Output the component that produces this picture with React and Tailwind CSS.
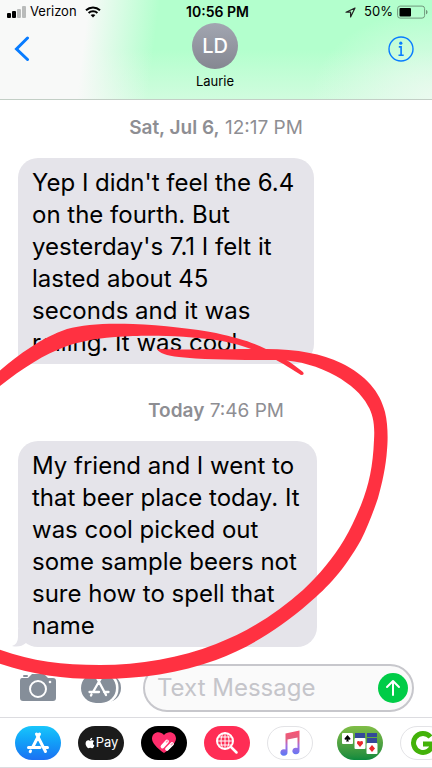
import { FaApple } from "react-icons/fa";

const RED = "#ff3141";

// Status bar: signal, carrier, clock and battery
const StatusBar = () => (
  <div className="grid grid-cols-3 items-center h-6 pl-[7px] pr-1 text-[13px] text-black">
    <div className="flex items-center gap-1">
      <svg width="19" height="12" viewBox="0 0 19 12">
        <rect x="0" y="7" width="4" height="5" rx="1" />
        <rect x="5" y="5" width="4" height="7" rx="1" />
        <rect x="10" y="3" width="4" height="9" rx="1" fill="#b9bbba" />
        <rect x="15" y="0" width="4" height="12" rx="1" fill="#b9bbba" />
      </svg>
      <span>Verizon</span>
      <svg className="ml-1" width="16" height="12" viewBox="0 0 16 12">
        <path d="M1 4.3C5 .6 11 .6 15 4.3" fill="none" stroke="#000" strokeWidth="2" />
        <path d="M3.6 7C6 4.8 10 4.8 12.4 7" fill="none" stroke="#000" strokeWidth="2" />
        <path d="M5.6 9.1C7 7.9 9 7.9 10.4 9.1L8 11.5Z" />
      </svg>
    </div>
    <div className="text-center text-sm font-semibold whitespace-nowrap">10:56 PM</div>
    <div className="flex items-center justify-end gap-1">
      <svg className="mr-1" width="11" height="11" viewBox="0 0 11 11">
        <path d="M10 1 1 5.2H5.6V10Z" fill="none" stroke="#222" strokeWidth="1.2" strokeLinejoin="round" />
      </svg>
      <span>50%</span>
      <svg width="31" height="14" viewBox="0 0 31 14">
        <rect x=".6" y="1.1" width="27" height="12" rx="2.5" fill="none" stroke="#71977c" />
        <rect x="2.5" y="3" width="11.5" height="8.5" rx="1" />
        <path d="M29 5c2 .6 2 3.7 0 4.3Z" fill="#71977c" />
      </svg>
    </div>
  </div>
);

const Header = () => (
  <header className="border-b border-[#c3cfc6] bg-[radial-gradient(ellipse_28%_90%_at_100%_100%,#eafaef_0%,transparent_100%),linear-gradient(97deg,#f8f9f8_20%,transparent_36%),linear-gradient(to_bottom,#b3ffcd_50%,#d0fcde_100%)]">
    <StatusBar />
    <div className="flex items-start justify-between h-[75px] px-[14px]">
      <button aria-label="Back" className="mt-3 w-7">
        <svg width="17" height="26" viewBox="0 0 17 26">
          <path d="M13.5 2 2.500 13 13.5 23.5" fill="none" stroke="#087cff" strokeWidth="3" strokeLinecap="round" />
        </svg>
      </button>
      <div className="flex flex-col items-center">
        <div className="flex items-center justify-center size-[46px] -mt-px rounded-full bg-linear-to-b from-[#a2a6b1] to-[#858791] text-white text-xl font-medium">
          LD
        </div>
        <span className="mt-[2px] text-[13px] leading-5 text-black">Laurie</span>
      </div>
      <button aria-label="Info" className="mt-3 mr-1">
        <svg width="26" height="26" viewBox="0 0 26 26">
          <circle cx="13" cy="13" r="12" fill="none" stroke="#087cff" strokeWidth="1.4" />
          <circle cx="12.800" cy="7.200" r="1.6" fill="#087cff" />
          <path d="M10.800 10.9H13.100V19M10.500 19.300H15.700" fill="none" stroke="#087cff" strokeWidth="1.600" />
        </svg>
      </button>
    </div>
  </header>
);

const Stamp = ({ day, time }) => (
  <p className="text-center text-[19px] leading-6 text-[#8e8e93]">
    <span className="font-semibold">{day}</span> {time}
  </p>
);

const Bubble = ({ lines, className }) => (
  <p className={`w-fit ml-[18px] pl-[14px] pt-[9px] pb-[5px] bg-[#e5e4ea] text-2xl leading-8 text-black whitespace-nowrap ${className}`}>
    {lines.map((line) => (
      <span key={line} className="block">
        {line}
      </span>
    ))}
  </p>
);

const first = [
  "Yep I didn't feel the 6.4",
  "on the fourth. But",
  "yesterday's 7.1 I felt it",
  "lasted about 45",
  "seconds and it was",
  "rolling. It was cool",
];

const second = [
  "My friend and I went to",
  "that beer place today. It",
  "was cool picked out",
  "some sample beers not",
  "sure how to spell that",
  "name",
];

const Compose = () => (
  <form className="flex items-center gap-[22px] h-[52px] pl-[19px] pr-[18px]" onSubmit={(e) => e.preventDefault()}>
    <button type="button" aria-label="Camera">
      <svg width="38" height="30" viewBox="0 0 38 30">
        <rect x="4" y="2" width="5" height="2" rx="1" fill="#858e99" />
        <path d="M3 5H9L13 1H25L29 5H34Q37 5 37 8V25Q37 28 34 28H4Q1 28 1 25V8Q1 5 3 5Z" fill="#858e99" />
        <circle cx="19" cy="16" r="8" fill="none" stroke="#fff" strokeWidth="2" />
        <circle cx="31" cy="9" r="1.3" fill="#fff" />
      </svg>
    </button>
    <button type="button" aria-label="Apps">
      <svg width="42" height="32" viewBox="0 0 42 32">
        <rect x="8" y="2" width="34" height="28" rx="14" fill="#858e99" />
        <rect x="4" y="0" width="35.500" height="32" rx="15" fill="#fff" />
        <rect x="2" y="1" width="35" height="30" rx="15" fill="#858e99" />
        <path d="M21.5 7 14 20M18.5 7 27 23M10.5 20H20M25 20H29.5M12.5 22.5 12 23.5" fill="none" stroke="#fff" strokeWidth="2.3" strokeLinecap="round" />
      </svg>
    </button>
    <div className="flex flex-1 min-w-0 items-center h-12 pl-3 pr-1 rounded-full border-2 border-[#c7c7cc] bg-[#fafafa]">
      <input
        aria-label="Text Message"
        placeholder="Text Message"
        className="flex-1 min-w-0 bg-transparent text-2xl outline-none placeholder:text-[#c5c5ca]"
      />
      <button aria-label="Send" className="flex items-center justify-center size-[30px] rounded-full bg-[#00cc47]">
        <svg width="18" height="20" viewBox="0 0 18 20" fill="none" stroke="#fff" strokeWidth="2" strokeLinecap="round" strokeLinejoin="round">
          <path d="M9 17V3M3 9 9 3 15 9" />
        </svg>
      </button>
    </div>
  </form>
);

const pill = "flex shrink-0 items-center justify-center w-[46px] h-[34px] rounded-full overflow-hidden";

const AppDrawer = () => (
  <nav className="flex items-center gap-[17px] h-[51px] pl-[15px] border-y border-[#dcdce0] overflow-hidden">
    <button aria-label="App Store" className={`${pill} bg-linear-to-b from-[#1ac6fb] to-[#1d70f2]`}>
      <svg width="24" height="24" viewBox="0 0 24 24" fill="none" stroke="#fff" strokeWidth="3" strokeLinecap="round">
        <path d="M13.5 3 6.500 16.500M10.5 3 19.500 20.500M2.500 16.500H14M18.500 16.500H21.500M4.500 20 4.200 20.700" />
      </svg>
    </button>
    <button className={`${pill} bg-[#1b1b1b] text-white text-[13px]`}>
      <FaApple size={12} />
      Pay
    </button>
    <button aria-label="Digital Touch" className={`${pill} bg-black`}>
      <svg width="24" height="22" viewBox="0 0 24 22">
        <path d="M12 21C5 16 0 11 0 6.5 0 0 8-2 12 3 16-2 24 0 24 6.5 24 11 18 17 12 21Z" fill="#ff2d6c" />
        <path d="M10.500 14.500 15 9.500M15 17 20 12" stroke="#fff" strokeWidth="3.800" strokeLinecap="round" />
        <path d="M14.500 10 15.500 9M19.300 12.700 20.300 11.700" stroke="#ff9dbb" strokeWidth="1.600" strokeLinecap="round" />
      </svg>
    </button>
    <button aria-label="Images" className={`${pill} bg-[#ff2d55]`}>
      <svg width="24" height="24" viewBox="0 0 24 24" fill="none" stroke="#fff">
        <circle cx="10" cy="10" r="8" strokeWidth="2" />
        <ellipse cx="10" cy="10" rx="4" ry="8" />
        <path d="M10 2V18M2 10H18M3.5 6H16.5M3.5 14H16.5" />
        <path d="M16 16 21.5 21.5" strokeWidth="2.5" strokeLinecap="round" />
      </svg>
    </button>
    <button aria-label="Music" className={`${pill} border border-[#e3e3e6] bg-white`}>
      <svg width="22" height="26" viewBox="0 0 22 26">
        <defs>
          <linearGradient id="note" x1="0" y1="0" x2="0" y2="1">
            <stop offset="0" stopColor="#fa5573" />
            <stop offset=".35" stopColor="#e0607f" />
            <stop offset=".6" stopColor="#a56de0" />
            <stop offset="1" stopColor="#5a79f5" />
          </linearGradient>
        </defs>
        <path d="M6.500 3.500 20.500 0.500V20.500A3.600 3.300 0 1 1 18.500 18V7.500L8.500 9.500V22A3.600 3.300 0 1 1 6.500 19.500Z" fill="url(#note)" />
      </svg>
    </button>
    <div className="w-[2px] h-[30px] -mx-[5px] bg-[#e5e5ea]" />
    <button aria-label="Solitaire" className={`${pill} bg-linear-to-b from-[#80bd46] to-[#078a3d]`}>
      <svg width="36" height="24" viewBox="0 0 36 24">
        <rect x="0" y="2" width="11" height="11" rx="1" fill="#fff" />
        <path d="M5.5 4 8.5 7.5Q8.5 9.5 6 8.5L7 10.5H4L5 8.5Q2.5 9.5 2.5 7.5Z" />
        <path d="M13 2H23V7H13ZM25 2H35V6H25ZM25 7H35V12H25Z" fill="#344999" />
        <rect x="12.5" y="7" width="11" height="11" rx="1" fill="#fff" />
        <path d="M18 16 15 12.5Q14.5 9 18 10.5 21.5 9 21 12.5Z" fill="#e9292b" />
        <rect x="24.5" y="12" width="11" height="11" rx="1" fill="#fff" />
        <path d="M30 14 33 17.5 30 21 27 17.5Z" fill="#e9292b" />
      </svg>
    </button>
    <button aria-label="GamePigeon" className={`${pill} border border-[#e3e3e6] bg-white`}>
      <svg width="26" height="26" viewBox="0 0 26 26" fill="none" stroke="#43b209" strokeWidth="5">
        <path d="M20.5 7A9.5 9.5 0 1 0 22.5 14H13" />
      </svg>
    </button>
  </nav>
);

// Hand-drawn marker loop over the conversation
const Marker = () => (
  <svg className="absolute inset-0 size-full pointer-events-none" viewBox="0 0 432 768" preserveAspectRatio="none" fill={RED}>
    <path d="M-5 375C14 358 40 338 67 329C84 324 108 323 133 324C162 325 195 329 216 333C238 338 252 342 266 349C280 355 292 363 303 372Q305 375 301 375C293 370 283 363 270 357C255 350 240 344 216 340C190 336 155 335 133 336C108 337 88 339 67 346C42 355 20 370-5 390Z" />
    <path d="M157 349C180 350 235 349 266 349C298 349 322 354 341 363C366 375 380 392 385 412C388 424 388 440 387 450C386 466 382 484 378 498C373 513 367 528 361 540C344 570 328 587 309 603C278 630 248 648 216 660C180 673 140 679 100 679C60 679 30 674-5 662V648C30 661 60 665 100 665C140 665 180 658 216 644C250 631 278 612 303 590C320 574 333 558 344 540C351 528 356 517 361 505C369 485 373 466 374 440C375 425 373 414 368 406C362 394 350 384 336 376C318 366 300 361 279 360C245 360 205 360 179 357Q160 355 157 349Z" />
  </svg>
);

export default function App() {
  return (
    <div className="relative min-h-screen overflow-hidden bg-white font-['Inter','Liberation_Sans',sans-serif]">
      <Header />
      <main className="pt-4 pb-[15px]">
        <Stamp day="Sat, Jul 6," time="12:17 PM" />
        <Bubble lines={first} className="mt-[18px] pr-5 rounded-t-[20px] rounded-br-[20px]" />
        <div className="mt-[35px]">
          <Stamp day="Today" time="7:46 PM" />
        </div>
        <div className="relative mt-[18px]">
          <Bubble lines={second} className="pr-[17px] rounded-[20px]" />
          <svg className="absolute bottom-0 left-3" width="20" height="18" viewBox="0 0 20 18" fill="#e5e4ea">
            <path d="M6 0V8Q6 15 0 17Q8 19 14 14L20 0Z" />
          </svg>
        </div>
      </main>
      <div className="pb-[3px]">
        <Compose />
      </div>
      <AppDrawer />
      <Marker />
    </div>
  );
}
